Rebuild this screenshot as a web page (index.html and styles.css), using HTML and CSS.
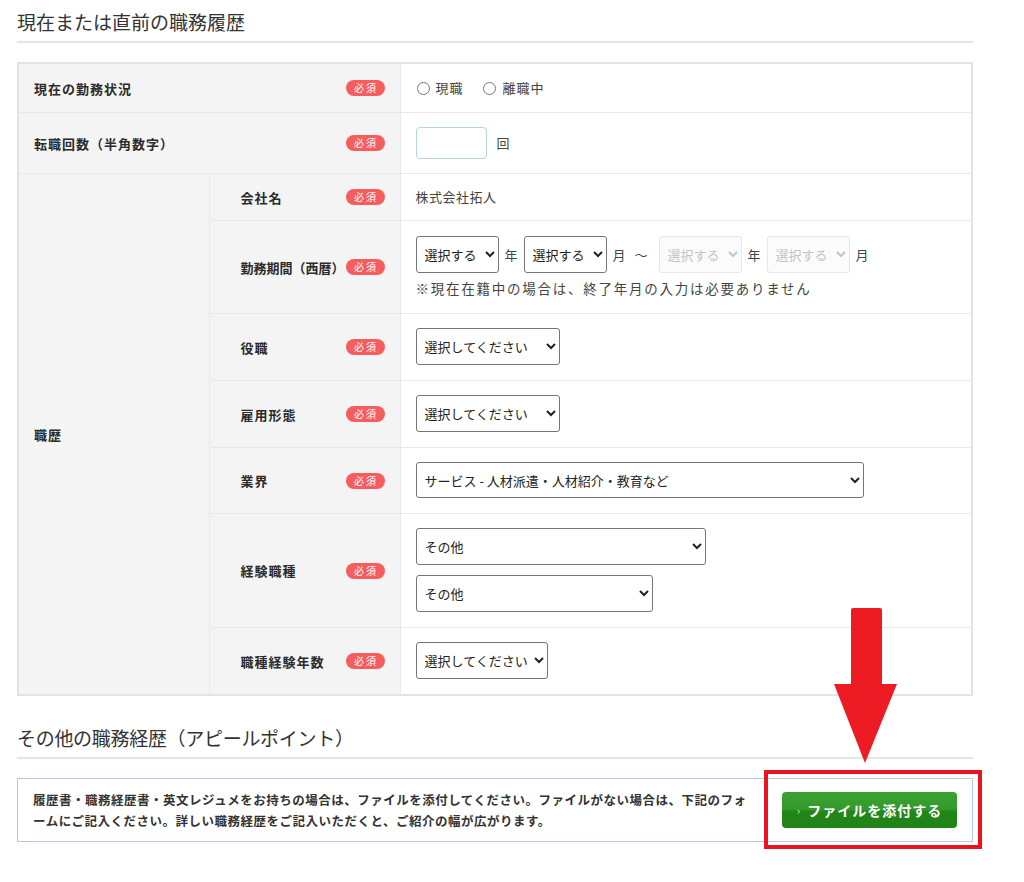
FILE: index.html
```html
<!DOCTYPE html>
<html lang="ja">
<head>
<meta charset="utf-8">
<title>職務履歴</title>
<link rel="stylesheet" href="styles.css">
</head>
<body>
<div class="page">
  <h2 class="sec-title first">現在または直前の職務履歴</h2>
  <table class="form">
    <colgroup><col class="c1"><col class="c2"><col class="c3"></colgroup>
    <tr>
      <th colspan="2" class="lbl"><div class="lbl-in"><span>現在の勤務状況</span><span class="req">必須</span></div></th>
      <td class="val v-radio">
        <label class="radio"><input type="radio" name="st"> 現職</label>
        <label class="radio"><input type="radio" name="st"> 離職中</label>
      </td>
    </tr>
    <tr>
      <th colspan="2" class="lbl"><div class="lbl-in"><span>転職回数（半角数字）</span><span class="req">必須</span></div></th>
      <td class="val v-input"><input type="text" class="num"><span class="unit">回</span></td>
    </tr>
    <tr>
      <th rowspan="7" class="lbl group">職歴</th>
      <th class="lbl sub"><div class="lbl-in"><span>会社名</span><span class="req">必須</span></div></th>
      <td class="val v-text"><span class="plain">株式会社拓人</span></td>
    </tr>
    <tr>
      <th class="lbl sub"><div class="lbl-in"><span class="narrow">勤務期間（西暦）</span><span class="req">必須</span></div></th>
      <td class="val v-period">
        <div class="period">
          <select class="sel-y"><option>選択する</option></select><span>年</span>
          <select class="sel-y"><option>選択する</option></select><span>月</span>
          <span class="tilde">〜</span>
          <select class="sel-y" disabled><option>選択する</option></select><span>年</span>
          <select class="sel-y" disabled><option>選択する</option></select><span>月</span>
        </div>
        <p class="note">※現在在籍中の場合は、終了年月の入力は必要ありません</p>
      </td>
    </tr>
    <tr>
      <th class="lbl sub"><div class="lbl-in"><span>役職</span><span class="req">必須</span></div></th>
      <td class="val"><select class="sel-m"><option>選択してください</option></select></td>
    </tr>
    <tr>
      <th class="lbl sub"><div class="lbl-in"><span>雇用形態</span><span class="req">必須</span></div></th>
      <td class="val"><select class="sel-m"><option>選択してください</option></select></td>
    </tr>
    <tr>
      <th class="lbl sub"><div class="lbl-in"><span>業界</span><span class="req">必須</span></div></th>
      <td class="val"><select class="sel-xl"><option>サービス - 人材派遣・人材紹介・教育など</option></select></td>
    </tr>
    <tr>
      <th class="lbl sub"><div class="lbl-in"><span>経験職種</span><span class="req">必須</span></div></th>
      <td class="val">
        <div class="stack">
          <select class="sel-l"><option>その他</option></select>
          <select class="sel-l2"><option>その他</option></select>
        </div>
      </td>
    </tr>
    <tr>
      <th class="lbl sub"><div class="lbl-in"><span>職種経験年数</span><span class="req">必須</span></div></th>
      <td class="val"><select class="sel-s"><option>選択してください</option></select></td>
    </tr>
  </table>

  <h2 class="sec-title second">その他の職務経歴（アピールポイント）</h2>
  <div class="attach">
    <p class="attach-text">履歴書・職務経歴書・英文レジュメをお持ちの場合は、ファイルを添付してください。ファイルがない場合は、下記のフォームにご記入ください。詳しい職務経歴をご記入いただくと、ご紹介の幅が広がります。</p>
    <button class="btn-attach" type="button"><span class="caret">›</span>ファイルを添付する</button>
  </div>

  <div class="highlight"></div>
  <svg class="arrow" width="64" height="156" viewBox="0 0 64 156" aria-hidden="true">
    <path d="M17 2 Q17 0 19 0 L46 0 Q48 0 48 2 L48 76 L63 76 L31 155 L0 76 L17 76 Z" fill="#ed1c24"/>
  </svg>
</div>
</body>
</html>
```

FILE: styles.css
```css
* { box-sizing: border-box; }
html, body { margin: 0; padding: 0; background: #fff; }
body {
  font-family: "Noto Sans CJK JP", "Noto Sans", sans-serif;
  color: #333;
  font-size: 13px;
}
.page {
  position: relative;
  width: 1024px;
  height: 882px;
  padding-left: 17px;
  overflow: hidden;
}
.sec-title {
  width: 956px;
  margin: 0;
  font-size: 19px;
  font-weight: 400;
  line-height: 30px;
  color: #333;
  padding-bottom: 4px;
  border-bottom: 2px solid #e6e6e6;
}
.sec-title.first { margin-top: 7px; }
.sec-title.second { margin-top: 27px; padding-bottom: 4px; letter-spacing: -0.3px; }

.form {
  width: 956px;
  margin-top: 19px;
  border-collapse: collapse;
  table-layout: fixed;
  border: 2px solid #e3e3e3;
}
.c1 { width: 191px; }
.c2 { width: 191px; }
.form th, .form td {
  border: 1px solid #e8e8e8;
  vertical-align: middle;
}
.lbl {
  background: #f4f4f4;
  text-align: left;
  font-weight: 700;
  font-size: 13px;
  letter-spacing: 1px;
  color: #2b2b2b;
  padding: 0 15px 0 15px;
}
.lbl.sub { padding-left: 31px; }
.lbl.group { padding-left: 15px; }
.lbl-in {
  display: flex;
  align-items: center;
  justify-content: space-between;
}
.narrow { letter-spacing: 0; }
.req {
  display: inline-flex;
  align-items: center;
  justify-content: center;
  width: 39px;
  height: 16px;
  border-radius: 8px;
  background: #f75d5d;
  color: #fff;
  font-size: 10px;
  font-weight: 400;
  letter-spacing: 2px;
  padding-left: 2px;
  line-height: 1;
}
.val {
  padding: 14px 15px 15px;
  color: #444;
  line-height: 20px;
}
.val.v-radio { padding: 14px 15px 14px; }
.val.v-input { padding: 14px 15px 14px; }
.val.v-text { padding: 14px 15px 14px; }
.val.v-period { padding: 15px 15px 15px; }
.radio {
  display: inline-flex;
  align-items: center;
  gap: 4px;
  margin-right: 16px;
  color: #444;
  letter-spacing: 1px;
  line-height: 20px;
  vertical-align: top;
}
.radio input {
  margin: 0 2px 0 1px;
  width: 13px;
  height: 13px;
}
.num {
  width: 71px;
  height: 32px;
  border: 1px solid #b9d2e2;
  border-radius: 4px;
  vertical-align: middle;
  font: inherit;
}
.unit { margin-left: 10px; vertical-align: middle; }
.plain { display: block; line-height: 18px; letter-spacing: 0.5px; }

select {
  height: 37px;
  font-family: "Noto Sans CJK JP", "Noto Sans", sans-serif;
  font-size: 13px;
  color: #222;
  padding: 0 4px;
  border-radius: 3px;
  background-color: #fff;
  border: 1px solid #767676;
  vertical-align: middle;
}
select:disabled {
  color: #aaa;
  border-color: #dcdcdc;
  background-color: #fafafa;
}
.sel-y { width: 83px; }
.sel-m { width: 144px; }
.sel-xl { width: 448px; height: 36px; }
.sel-l { width: 290px; }
.sel-l2 { width: 237px; }
.sel-s { width: 132px; }

.period {
  display: flex;
  align-items: center;
  gap: 6px;
  color: #444;
}
.tilde { margin: 0 5px 0 3px; }
.note {
  margin: 5px 0 0;
  font-size: 13.5px;
  letter-spacing: 1.75px;
  line-height: 20px;
  color: #444;
}
.stack {
  display: flex;
  flex-direction: column;
  align-items: flex-start;
  gap: 10px;
}

.attach {
  width: 956px;
  margin-top: 19px;
  border: 1px solid #b7c8e6;
  display: flex;
  align-items: center;
  justify-content: space-between;
  padding: 10px 15px 10px 15px;
  min-height: 64px;
}
.attach-text {
  margin: 0;
  width: 726px;
  font-size: 12.5px;
  font-weight: 700;
  line-height: 21px;
  letter-spacing: 0.5px;
  color: #333;
}
.btn-attach {
  width: 175px;
  height: 36px;
  border: none;
  border-radius: 4px;
  background: linear-gradient(#3aa232 0%, #33992c 50%, #228619 52%, #1f8317 100%);
  color: #fff;
  font-family: "Noto Sans CJK JP", "Noto Sans", sans-serif;
  font-size: 14px;
  font-weight: 700;
  letter-spacing: 1px;
  display: flex;
  align-items: center;
  justify-content: center;
  gap: 6px;
  padding: 0;
}
.caret { font-size: 11px; font-weight: 400; color: #cde8c9; }

.highlight {
  position: absolute;
  left: 764px;
  top: 770px;
  width: 218px;
  height: 79px;
  border: 4px solid #e9141f;
}
.arrow {
  position: absolute;
  left: 834px;
  top: 608px;
}
```
